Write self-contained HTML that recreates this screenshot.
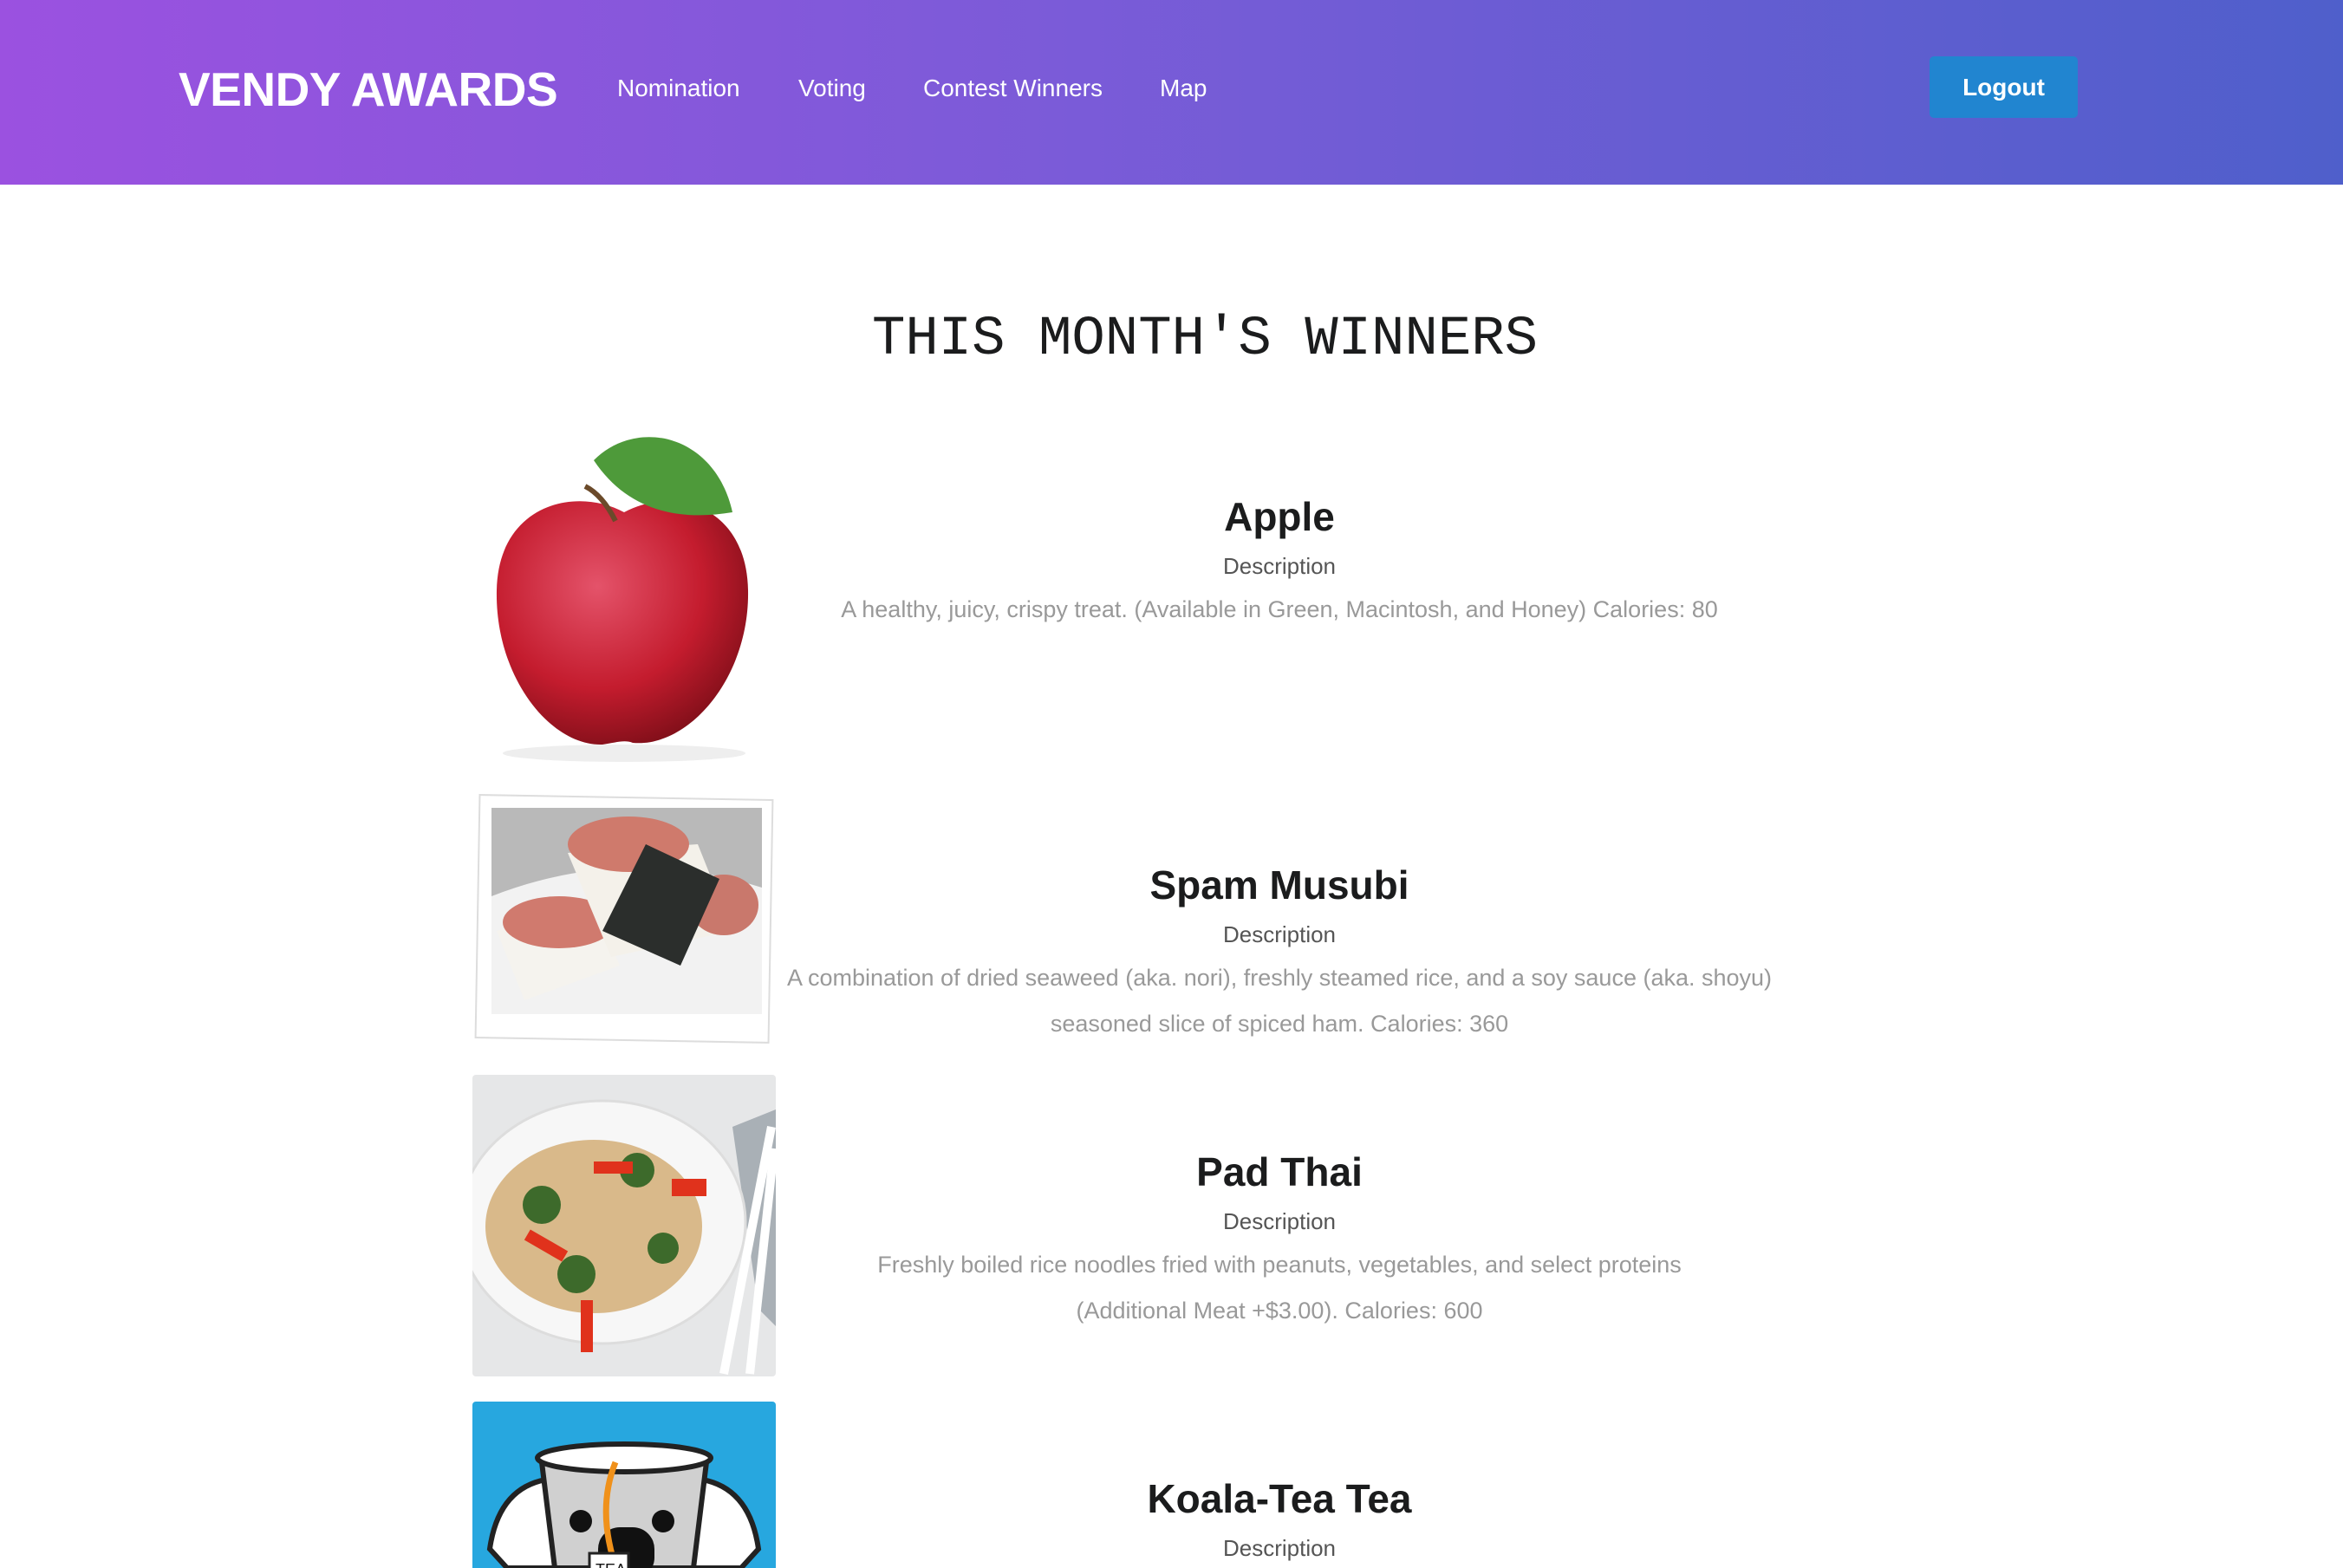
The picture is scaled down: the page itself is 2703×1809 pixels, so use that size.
<!DOCTYPE html>
<html><head><meta charset="utf-8">
<style>
*{margin:0;padding:0;box-sizing:border-box}
body{width:2703px;height:1809px;overflow:hidden;background:#fff;font-family:"Liberation Sans",sans-serif;position:relative}
.hdr{position:absolute;left:0;top:0;width:2703px;height:213px;background:linear-gradient(90deg,#9b51e0 0%,#7b5bd8 45%,#4f5fcb 100%)}
.logo{position:absolute;left:206px;top:70px;color:#fff;font-weight:bold;font-size:55px;line-height:66px;letter-spacing:-0.5px}
.nav{position:absolute;top:84px;color:#fff;font-size:28px;line-height:36px}
.btn{position:absolute;left:2226px;top:65px;width:171px;height:71px;background:#2185d0;border-radius:5px;color:#fff;font-weight:bold;font-size:28px;line-height:71px;text-align:center}
h1{position:absolute;left:0;width:2780px;top:352px;text-align:center;font-family:"Liberation Mono",monospace;font-weight:normal;font-size:64px;line-height:80px;color:#1b1c1d}
.t{position:absolute;left:776px;width:1400px;text-align:center}
.ti{font-weight:bold;font-size:46px;line-height:56px;color:#1b1c1d}
.d{font-size:26px;line-height:34px;color:#555;margin-top:12px}
.b{font-size:27px;line-height:53px;color:#999;margin-top:7px}
.img{position:absolute;left:545px;width:350px}
</style></head><body>
<div class="hdr">
<div class="logo">VENDY AWARDS</div>
<div class="nav" style="left:712px">Nomination</div>
<div class="nav" style="left:921px">Voting</div>
<div class="nav" style="left:1065px">Contest Winners</div>
<div class="nav" style="left:1338px">Map</div>
<div class="btn">Logout</div>
</div>
<h1>THIS MONTH'S WINNERS</h1>

<svg class="img" style="top:491px" width="350" height="388" viewBox="0 0 350 388">
<defs><radialGradient id="ap" cx="0.4" cy="0.35" r="0.7"><stop offset="0" stop-color="#e4536a"/><stop offset="0.6" stop-color="#c41c2e"/><stop offset="1" stop-color="#7d0e18"/></radialGradient></defs>
<ellipse cx="175" cy="378" rx="140" ry="10" fill="#eee"/>
<path d="M175 100 C120 70 30 90 28 190 C26 290 90 370 150 368 C165 366 175 362 185 366 C250 372 320 290 318 190 C316 90 230 70 175 100Z" fill="url(#ap)"/>
<path d="M130 70 Q150 80 165 110" stroke="#6b4a2a" stroke-width="6" fill="none"/>
<path d="M140 40 C190 -10 280 10 300 100 C240 110 180 100 140 40Z" fill="#4e9a3a"/>
</svg>

<svg class="img" style="top:914px" width="350" height="293" viewBox="0 0 350 293">
<rect x="6" y="6" width="338" height="280" fill="#fff" stroke="#ddd" stroke-width="2" transform="rotate(1 175 146)"/>
<rect x="22" y="18" width="312" height="238" fill="#b9b9b9"/>
<path d="M22 120 Q175 60 334 110 L334 256 L22 256Z" fill="#f2f2f2"/>
<path d="M28 160 L140 130 L170 200 L60 240Z" fill="#f5f3ee"/>
<ellipse cx="100" cy="150" rx="65" ry="30" fill="#d07a6e"/>
<path d="M110 70 L260 60 L300 160 L160 190Z" fill="#f4f1ea"/>
<ellipse cx="180" cy="60" rx="70" ry="32" fill="#cf7a6c"/>
<ellipse cx="290" cy="130" rx="40" ry="35" fill="#c9786c"/>
<path d="M200 60 L285 100 L240 200 L150 160Z" fill="#2b2e2c"/>
</svg>

<svg class="img" style="top:1240px" width="350" height="348" viewBox="0 0 350 348">
<rect width="350" height="348" rx="4" fill="#e6e7e8"/>
<path d="M300 60 L350 40 L350 290 L330 270Z" fill="#a9b0b6"/>
<ellipse cx="150" cy="170" rx="165" ry="140" fill="#f7f7f7" stroke="#ddd" stroke-width="3"/>
<ellipse cx="140" cy="175" rx="125" ry="100" fill="#d9b98a"/>
<circle cx="80" cy="150" r="22" fill="#3d6a2b"/><circle cx="190" cy="110" r="20" fill="#3d6a2b"/><circle cx="120" cy="230" r="22" fill="#3d6a2b"/><circle cx="220" cy="200" r="18" fill="#3d6a2b"/>
<rect x="60" y="190" width="50" height="14" fill="#e0321c" transform="rotate(30 85 197)"/><rect x="140" y="100" width="45" height="14" fill="#e0321c"/><rect x="125" y="260" width="14" height="60" fill="#e0321c"/><rect x="230" y="120" width="40" height="20" fill="#e0321c"/>
<line x1="345" y1="60" x2="290" y2="345" stroke="#fff" stroke-width="10"/><line x1="348" y1="85" x2="320" y2="345" stroke="#fff" stroke-width="10"/>
</svg>

<svg class="img" style="top:1617px" width="350" height="192" viewBox="0 0 350 192">
<rect width="350" height="200" rx="4" fill="#27a7df"/>
<path d="M85 90 Q30 100 20 170 L40 192 L110 192Z" fill="#fff" stroke="#222" stroke-width="6"/>
<path d="M265 90 Q320 100 330 170 L310 192 L240 192Z" fill="#fff" stroke="#222" stroke-width="6"/>
<path d="M80 70 L270 70 L255 192 L95 192Z" fill="#d0d0d0" stroke="#222" stroke-width="6"/>
<ellipse cx="175" cy="65" rx="100" ry="16" fill="#fff" stroke="#222" stroke-width="6"/>
<circle cx="125" cy="138" r="13" fill="#111"/><circle cx="220" cy="138" r="13" fill="#111"/>
<rect x="145" y="145" width="65" height="60" rx="25" fill="#111"/>
<path d="M165 70 Q145 120 162 180" stroke="#f0911a" stroke-width="7" fill="none"/>
<rect x="135" y="175" width="45" height="30" fill="#fff" stroke="#222" stroke-width="3"/>
<text x="142" y="200" font-family="Liberation Sans" font-size="18" fill="#111">TEA</text>
</svg>

<div class="t" style="top:568px"><div class="ti">Apple</div><div class="d">Description</div><div class="b">A healthy, juicy, crispy treat. (Available in Green, Macintosh, and Honey) Calories: 80</div></div>
<div class="t" style="top:993px"><div class="ti">Spam Musubi</div><div class="d">Description</div><div class="b">A combination of dried seaweed (aka. nori), freshly steamed rice, and a soy sauce (aka. shoyu)<br>seasoned slice of spiced ham. Calories: 360</div></div>
<div class="t" style="top:1324px"><div class="ti">Pad Thai</div><div class="d">Description</div><div class="b">Freshly boiled rice noodles fried with peanuts, vegetables, and select proteins<br>(Additional Meat +$3.00). Calories: 600</div></div>
<div class="t" style="top:1701px"><div class="ti">Koala-Tea Tea</div><div class="d">Description</div></div>
</body></html>
